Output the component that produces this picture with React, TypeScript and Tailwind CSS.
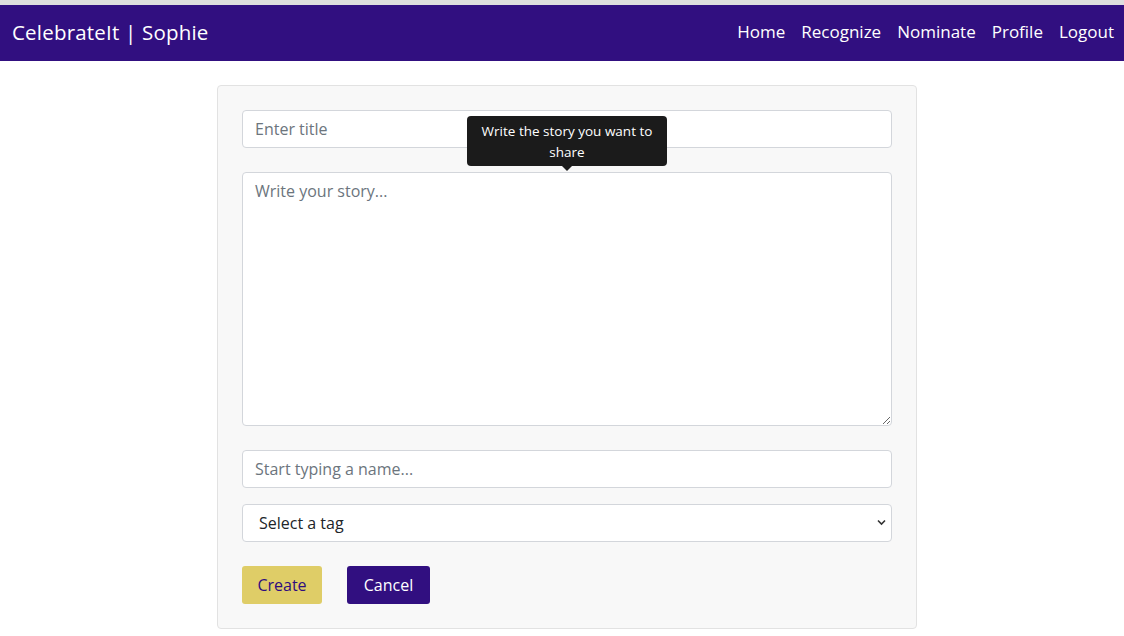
export default function App() {
  const links = ['Home', 'Recognize', 'Nominate', 'Profile', 'Logout'];

  return (
    <div className="min-h-[636px] bg-white font-['Open_Sans',sans-serif]">
      <div className="h-[5px] bg-[#dedede]" />
      <nav className="flex h-[56px] items-center justify-between bg-[#310f80] pl-3 pr-[10px] pb-[2px] text-white">
        <span className="text-[20.5px] tracking-[0.2px]">CelebrateIt | Sophie</span>
        <div className="flex gap-4 text-[17px]">
          {links.map((link) => (
            <a key={link} href="#" className="text-white">
              {link}
            </a>
          ))}
        </div>
      </nav>

      <div className="flex justify-center pl-[10px] pt-6">
        <div className="w-[700px] rounded border border-[#e2e2e2] bg-[#f8f8f8] px-6 py-6">
          <div className="relative flex flex-col">
            <input
              type="text"
              placeholder="Enter title"
              className="h-[38px] w-full rounded border border-[#d3d6db] bg-white px-3 text-[16px] text-[#212529] placeholder:text-[#6c757d] outline-none"
            />

            <div className="absolute left-[225px] top-[6px] w-[200px] rounded bg-[#1b1b1b] px-2 pt-[5px] pb-[3px] text-center text-[13.5px] font-medium leading-[21px] text-white">
              Write the story you want to share
              <div className="absolute -bottom-[5px] left-[95px] h-0 w-0 border-x-[5px] border-t-[5px] border-x-transparent border-t-[#1b1b1b]" />
            </div>

            <textarea
              placeholder="Write your story..."
              className="mt-6 h-[254px] w-full resize-y rounded border border-[#d3d6db] bg-white px-3 py-[6px] text-[16px] text-[#212529] placeholder:text-[#6c757d] outline-none"
            />

            <input
              type="text"
              placeholder="Start typing a name..."
              className="mt-6 h-[38px] w-full rounded border border-[#d3d6db] bg-white px-3 text-[16px] text-[#212529] placeholder:text-[#6c757d] outline-none"
            />

            <div className="relative mt-4">
              <select className="h-[38px] w-full appearance-none rounded border border-[#d3d6db] bg-white pl-4 text-[16px] text-[#212529] outline-none">
                <option>Select a tag</option>
              </select>
              <svg
                className="pointer-events-none absolute right-[6px] top-[15px]"
                width="9"
                height="7"
                viewBox="0 0 9 7"
              >
                <path d="M1 1.5l3.5 3.5 3.5-3.5" fill="none" stroke="#333" strokeWidth="1.6" />
              </svg>
            </div>

            <div className="mt-6 flex gap-[25px]">
              <button className="h-[38px] w-[80px] rounded-[3px] bg-[#dfcd67] text-[16px] text-[#2e0c7f]">
                Create
              </button>
              <button className="h-[38px] w-[83px] rounded-[3px] bg-[#310f80] text-[16px] text-white">
                Cancel
              </button>
            </div>
          </div>
        </div>
      </div>
    </div>
  );
}
